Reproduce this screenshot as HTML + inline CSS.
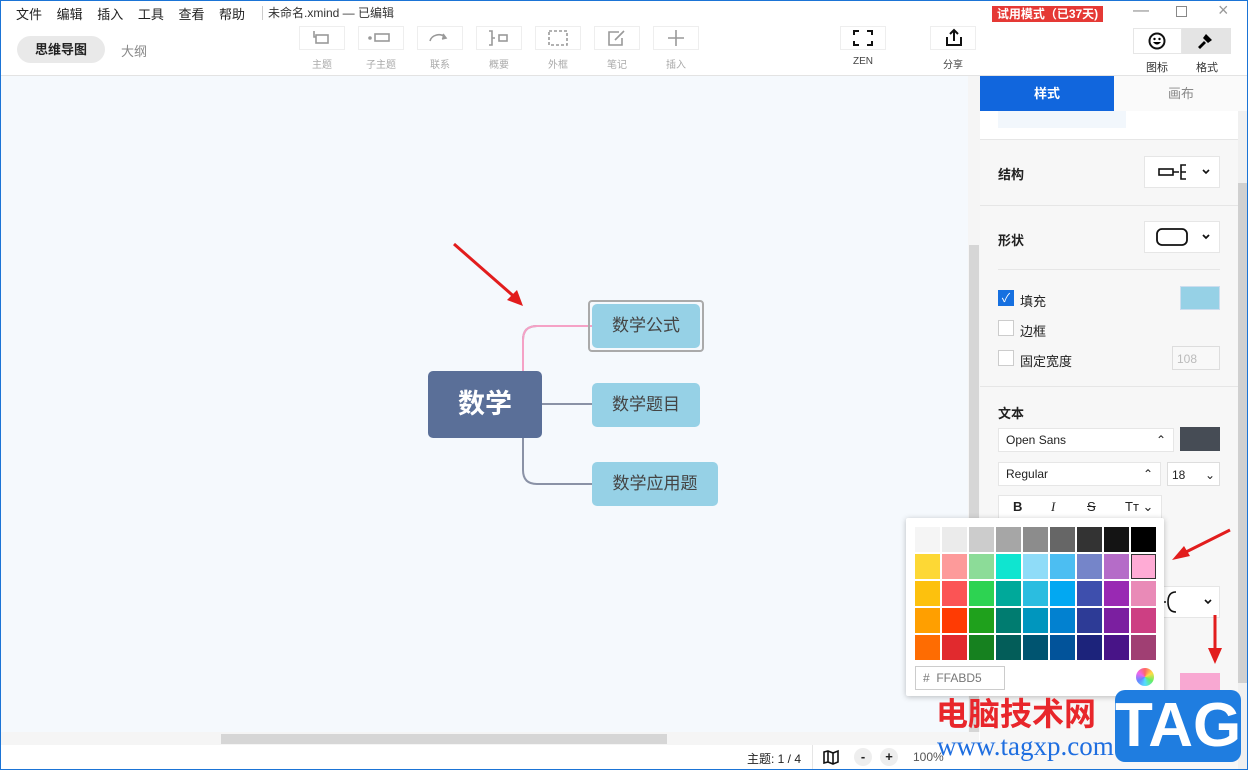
<!DOCTYPE html><html><head><meta charset="utf-8"><style>
*{box-sizing:border-box;margin:0;padding:0}
body{width:1248px;height:770px;overflow:hidden;font-family:"Liberation Sans","Noto Sans CJK SC",sans-serif;background:#fff;position:relative;font-size:13px;color:#222}
.a{position:absolute}
.tb{width:46px;height:24px;border:1px solid #eee;background:#fff;top:26px}
.tl{font-size:10px;color:#aaa;top:56px;width:46px;text-align:center}
.cell{position:absolute;width:25px;height:25px}
.chk{width:16px;height:16px;border:1px solid #ccc;background:#fff}
.sel{background:#fff;border:1px solid #e6e6e6}
</style></head><body>
<div class="a" style="left:0;top:0;width:1248px;height:770px;border:1px solid #1b74d6;z-index:50;pointer-events:none"></div>
<!-- menu -->
<div class="a" style="left:16px;top:4px;font-size:13px;word-spacing:11px">文件 编辑 插入 工具 查看 帮助</div>
<div class="a" style="left:262px;top:6px;width:1px;height:14px;background:#ccc"></div>
<div class="a" style="left:268px;top:4px;font-size:12px;color:#333">未命名.xmind — 已编辑</div>
<div class="a" style="left:992px;top:6px;width:111px;height:16px;background:#e53935;color:#fff;font-size:12px;font-weight:bold;text-align:center;line-height:16px">试用模式（已37天)</div>
<div class="a" style="left:1133px;top:2px;color:#888;font-size:16px">—</div>
<div class="a" style="left:1176px;top:6px;width:11px;height:11px;border:1px solid #888"></div>
<div class="a" style="left:1218px;top:0px;color:#999;font-size:18px">×</div>
<!-- toolbar -->
<div class="a" style="left:17px;top:36px;width:88px;height:27px;border-radius:14px;background:#e9e9e9;font-weight:bold;font-size:13px;text-align:center;line-height:27px">思维导图</div>
<div class="a" style="left:121px;top:41px;color:#888;font-size:13px">大纲</div>
<div class="a tb" style="left:299px"></div><div class="a tl" style="left:299px">主题</div>
<div class="a tb" style="left:358px"></div><div class="a tl" style="left:358px">子主题</div>
<div class="a tb" style="left:417px"></div><div class="a tl" style="left:417px">联系</div>
<div class="a tb" style="left:476px"></div><div class="a tl" style="left:476px">概要</div>
<div class="a tb" style="left:535px"></div><div class="a tl" style="left:535px">外框</div>
<div class="a tb" style="left:594px"></div><div class="a tl" style="left:594px">笔记</div>
<div class="a tb" style="left:653px"></div><div class="a tl" style="left:653px">插入</div>
<svg class="a" style="left:299px;top:26px" width="420" height="24" fill="none" stroke="#999" stroke-width="1.6">
<rect x="17" y="9" width="12" height="8"/><path d="M15 5v6h2"/>
<circle cx="71" cy="12" r="1" fill="#999"/><rect x="76" y="8" width="14" height="7"/>
<path d="M131 15a9 8 0 0 1 15 -4"/><path d="M144 8l3 4-4 1" fill="#999"/>
<path d="M190 5h3v14h-3M193 12h3"/><rect x="200" y="9" width="8" height="6"/>
<rect x="250" y="5" width="18" height="14" stroke-dasharray="3 2"/>
<path d="M320 6h-10v13h13v-7M316 14l9-9"/>
<path d="M377 4v16M369 12h16"/></svg>
<div class="a tb" style="left:840px;width:46px"></div><div class="a tl" style="left:840px;color:#444">ZEN</div>
<svg class="a" style="left:852px;top:29px" width="22" height="18" fill="none" stroke="#111" stroke-width="2"><path d="M2 6V2h5M15 2h5v4M20 12v4h-5M7 16H2v-4"/></svg>
<div class="a tb" style="left:930px;width:46px"></div><div class="a tl" style="left:930px;color:#444">分享</div>
<svg class="a" style="left:944px;top:28px" width="20" height="20" fill="none" stroke="#111" stroke-width="2"><path d="M3 9v8h14V9M10 13V2M6 6l4-4 4 4"/></svg>
<div class="a" style="left:1133px;top:28px;width:49px;height:26px;border:1px solid #e6e6e6;background:#fff"></div>
<div class="a" style="left:1182px;top:28px;width:49px;height:26px;background:#e4e4e4"></div>
<svg class="a" style="left:1148px;top:31px" width="20" height="20"><circle cx="9" cy="10" r="7.5" fill="none" stroke="#111" stroke-width="2"/><circle cx="6.5" cy="8" r="1.2"/><circle cx="11.5" cy="8" r="1.2"/><path d="M5 11q4 5 8 0z"/></svg>
<svg class="a" style="left:1196px;top:31px" width="20" height="20"><path d="M10 3l6 6-4 3-5-5z M8 10l2 2-6 6-2-2z"/></svg>
<div class="a" style="left:1146px;top:59px;font-size:11px;color:#333">图标</div>
<div class="a" style="left:1196px;top:59px;font-size:11px;color:#333">格式</div>
<div class="a" style="left:0;top:75px;width:1248px;height:1px;background:#e3e3e3"></div>
<!-- canvas -->
<div class="a" style="left:1px;top:76px;width:967px;height:656px;background:#f5f9fd"></div>
<div class="a" style="left:968px;top:76px;width:12px;height:656px;background:#f5f5f5"></div>
<div class="a" style="left:969px;top:245px;width:10px;height:490px;background:#d6d6d6"></div>
<div class="a" style="left:1px;top:732px;width:978px;height:13px;background:#f5f5f5"></div>
<div class="a" style="left:221px;top:734px;width:446px;height:10px;background:#d6d6d6"></div>
<svg class="a" style="left:0;top:0" width="980" height="745">
<path d="M541 404H592M523 372V340q0-14 14-14H592M523 438v32q0 14 14 14H592" fill="none" stroke="#8a92a6" stroke-width="2"/>
<path d="M523 372V340q0-14 14-14H592" fill="none" stroke="#f5a2c6" stroke-width="2"/>
<path d="M454 244L518 300" stroke="#e21d1d" stroke-width="3"/><path d="M523 306l-16-6 10-10z" fill="#e21d1d"/>
</svg>
<div class="a" style="left:428px;top:371px;width:114px;height:67px;background:#5a6f98;border-radius:5px;color:#fff;font-size:27px;font-weight:bold;text-align:center;line-height:67px">数学</div>
<div class="a" style="left:588px;top:300px;width:116px;height:52px;border:2px solid #aaa;border-radius:4px"></div>
<div class="a" style="left:592px;top:304px;width:108px;height:44px;background:#96d1e6;border-radius:5px;font-size:17px;color:#444;text-align:center;line-height:44px">数学公式</div>
<div class="a" style="left:592px;top:383px;width:108px;height:44px;background:#96d1e6;border-radius:5px;font-size:17px;color:#444;text-align:center;line-height:44px">数学题目</div>
<div class="a" style="left:592px;top:462px;width:126px;height:44px;background:#96d1e6;border-radius:5px;font-size:17px;color:#444;text-align:center;line-height:44px">数学应用题</div>
<!-- status -->
<div class="a" style="left:747px;top:750px;font-size:12px">主题: 1 / 4</div>
<div class="a" style="left:812px;top:745px;width:1px;height:25px;background:#e5e5e5"></div>
<svg class="a" style="left:822px;top:749px" width="18" height="16" fill="none" stroke="#111" stroke-width="1.6"><path d="M2 3l4-1 5 2 5-2v11l-5 2-5-2-4 1zM6 2v11M11 4v11"/></svg>
<div class="a" style="left:854px;top:748px;width:18px;height:18px;border-radius:9px;background:#eee;text-align:center;font-weight:bold;line-height:18px">-</div>
<div class="a" style="left:880px;top:748px;width:18px;height:18px;border-radius:9px;background:#eee;text-align:center;font-weight:bold;line-height:18px">+</div>
<div class="a" style="left:913px;top:750px;font-size:12px;color:#555">100%</div>
<!-- right panel -->
<div class="a" style="left:980px;top:76px;width:268px;height:694px;background:#f7f7f7"></div>
<div class="a" style="left:980px;top:76px;width:134px;height:35px;background:#1166dd;color:#fff;font-weight:bold;text-align:center;line-height:35px">样式</div>
<div class="a" style="left:1114px;top:76px;width:134px;height:35px;background:#fafafa;color:#888;text-align:center;line-height:35px">画布</div>
<div class="a" style="left:1238px;top:111px;width:10px;height:659px;background:#f0f0f0"></div>
<div class="a" style="left:1238px;top:183px;width:10px;height:500px;background:#d0d0d0"></div>
<div class="a" style="left:980px;top:111px;width:258px;height:28px;background:#fff"></div>
<div class="a" style="left:998px;top:111px;width:128px;height:17px;background:#f2f7fc"></div>
<div class="a" style="left:980px;top:139px;width:258px;height:1px;background:#e6e6e6"></div>
<div class="a" style="left:998px;top:164px;font-weight:bold">结构</div>
<div class="a sel" style="left:1144px;top:156px;width:76px;height:32px"></div>
<svg class="a" style="left:1156px;top:162px" width="60" height="20" fill="none" stroke="#111" stroke-width="1.6"><rect x="3" y="7" width="14" height="6"/><path d="M17 10h6M30 3h-5v14h5M25 10h5"/><path d="M47 8l3 3 3-3"/></svg>
<div class="a" style="left:980px;top:205px;width:258px;height:1px;background:#e6e6e6"></div>
<div class="a" style="left:998px;top:230px;font-weight:bold">形状</div>
<div class="a sel" style="left:1144px;top:221px;width:76px;height:32px"></div>
<svg class="a" style="left:1154px;top:226px" width="62" height="22" fill="none" stroke="#111" stroke-width="1.8"><rect x="3" y="3" width="30" height="16" rx="5"/><path d="M49 9l3 3 3-3"/></svg>
<div class="a" style="left:998px;top:269px;width:222px;height:1px;background:#e6e6e6"></div>
<div class="a chk" style="left:998px;top:290px;background:#1670e0;border-color:#1670e0;color:#fff;font-size:12px;text-align:center;line-height:14px">✓</div>
<div class="a" style="left:1020px;top:291px">填充</div>
<div class="a" style="left:1180px;top:286px;width:40px;height:24px;background:#96d1e6;border:1px solid #cde"></div>
<div class="a chk" style="left:998px;top:320px"></div><div class="a" style="left:1020px;top:321px">边框</div>
<div class="a chk" style="left:998px;top:350px"></div><div class="a" style="left:1020px;top:351px">固定宽度</div>
<div class="a" style="left:1172px;top:346px;width:48px;height:24px;border:1px solid #ddd;background:#f8f8f8;color:#bbb;font-size:12px;padding:5px 4px">108</div>
<div class="a" style="left:980px;top:386px;width:258px;height:1px;background:#e6e6e6"></div>
<div class="a" style="left:998px;top:403px;font-weight:bold">文本</div>
<div class="a sel" style="left:998px;top:428px;width:176px;height:24px;padding:4px 7px;font-size:12px">Open Sans<span style="float:right">⌃</span></div>
<div class="a" style="left:1180px;top:427px;width:40px;height:24px;background:#464c55"></div>
<div class="a sel" style="left:998px;top:462px;width:163px;height:24px;padding:4px 7px;font-size:12px">Regular<span style="float:right">⌃</span></div>
<div class="a sel" style="left:1167px;top:462px;width:53px;height:24px;padding:5px 4px;font-size:12px;border-color:#ddd">18<span style="float:right">⌄</span></div>
<div class="a sel" style="left:998px;top:495px;width:164px;height:24px;font-size:13px;line-height:22px"><b style="position:absolute;left:14px">B</b><i style="position:absolute;left:52px;font-family:'Liberation Serif'">I</i><s style="position:absolute;left:88px">S</s><span style="position:absolute;left:126px">Tт ⌄</span></div>
<div class="a sel" style="left:1160px;top:586px;width:60px;height:32px"></div>
<svg class="a" style="left:1160px;top:588px" width="60" height="28" fill="none" stroke="#111" stroke-width="1.6"><path d="M0 14h6M16 4q-8 0-8 10 0 10 8 10"/><path d="M45 12l3 3 3-3"/></svg>
<div class="a" style="left:1180px;top:673px;width:40px;height:24px;background:#f8a8d2"></div>
<svg class="a" style="left:1150px;top:520px" width="98" height="150"><path d="M80 10L30 35" stroke="#e21d1d" stroke-width="3"/><path d="M22 40l12-14 6 10z" fill="#e21d1d"/><path d="M65 95v38" stroke="#e21d1d" stroke-width="3"/><path d="M58 128h14l-7 16z" fill="#e21d1d"/></svg>
<!-- color popup -->
<div class="a" style="left:906px;top:518px;width:258px;height:178px;background:#fff;box-shadow:0 1px 6px rgba(0,0,0,.25);border-radius:2px"></div>
<div id="g" class="a" style="left:915px;top:527px;width:243px;height:135px"></div>
<div class="a" style="left:915px;top:666px;width:90px;height:24px;border:1px solid #ccc;color:#777;font-size:12px;padding:4px 7px">#&nbsp; FFABD5</div>
<div class="a" style="left:1136px;top:668px;width:18px;height:18px;border-radius:9px;background:conic-gradient(#f66,#fd4,#6e6,#5df,#68f,#e6e,#f66)"></div>
<!-- watermark -->
<div class="a" style="left:936px;top:692px;color:#e8262b;font-size:32px;font-weight:bold;font-family:'Noto Sans CJK SC',sans-serif;line-height:40px">电脑技术网</div>
<div class="a" style="left:937px;top:731px;color:#1e6ee0;font-size:27px;font-family:'Liberation Serif',serif">www.tagxp.com</div>
<div class="a" style="left:1115px;top:690px;width:126px;height:72px;background:#1f7de0;border-radius:10px;color:#fff;font-size:62px;font-weight:bold;text-align:center;line-height:72px">TAG</div>
<script>
var c=["#f5f5f5","#ebebeb","#cccccc","#a6a6a6","#8c8c8c","#666666","#333333","#141414","#000000",
"#fdd835","#fd9a9a","#8cdc98","#0fe5d0","#8fdcf8","#4cbef2","#7585c9","#b56cc8","#ffabd5",
"#fdc10d","#fb5455","#2dd352","#00a99a","#2bbde0","#02a8f2","#3e4fad","#9929b3","#e98ab7",
"#ff9f00","#ff3b03","#1fa11c","#007c70","#0096be","#0281d0","#2d3b96","#7b1fa0","#cd3f83",
"#fe6c02","#e12a2e","#16811f","#035d59","#005470","#02539a","#1c237b","#481487","#a03f73"];
var h="";for(var i=0;i<45;i++){var r=Math.floor(i/9),k=i%9;h+='<div class="cell" style="left:'+(k*27)+'px;top:'+(r*27)+'px;background:'+c[i]+(i==17?';outline:1px solid #333;outline-offset:-1px':'')+'"></div>'}
document.getElementById("g").innerHTML=h;
</script>
</body></html>
